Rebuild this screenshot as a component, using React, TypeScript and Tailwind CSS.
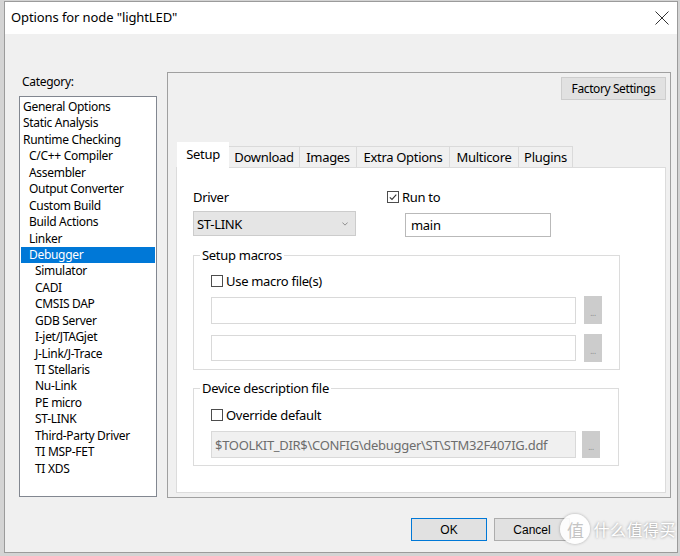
import React from "react";

const CATEGORIES: { label: string; level: number; selected?: boolean }[] = [
  { label: "General Options", level: 0 },
  { label: "Static Analysis", level: 0 },
  { label: "Runtime Checking", level: 0 },
  { label: "C/C++ Compiler", level: 1 },
  { label: "Assembler", level: 1 },
  { label: "Output Converter", level: 1 },
  { label: "Custom Build", level: 1 },
  { label: "Build Actions", level: 1 },
  { label: "Linker", level: 1 },
  { label: "Debugger", level: 1, selected: true },
  { label: "Simulator", level: 2 },
  { label: "CADI", level: 2 },
  { label: "CMSIS DAP", level: 2 },
  { label: "GDB Server", level: 2 },
  { label: "I-jet/JTAGjet", level: 2 },
  { label: "J-Link/J-Trace", level: 2 },
  { label: "TI Stellaris", level: 2 },
  { label: "Nu-Link", level: 2 },
  { label: "PE micro", level: 2 },
  { label: "ST-LINK", level: 2 },
  { label: "Third-Party Driver", level: 2 },
  { label: "TI MSP-FET", level: 2 },
  { label: "TI XDS", level: 2 },
];

const TABS = [
  { label: "Setup", w: "w-[52px]" },
  { label: "Download", w: "w-[71px]" },
  { label: "Images", w: "w-[57px]" },
  { label: "Extra Options", w: "w-[93px]" },
  { label: "Multicore", w: "w-[69px]" },
  { label: "Plugins", w: "w-[54px]" },
];

const indent = ["pl-[2px]", "pl-[8px]", "pl-[14px]"];

function CheckBox({ checked }: { checked?: boolean }) {
  return (
    <span className="flex h-[12px] w-[12px] shrink-0 items-center justify-center border border-[#4d4d4d] bg-white">
      {checked && (
        <svg viewBox="0 0 10 10" className="h-[10px] w-[10px]">
          <path d="M1.8 5.3 L4 7.4 L8.3 2.6" fill="none" stroke="#333" strokeWidth="1.1" />
        </svg>
      )}
    </span>
  );
}

function DotsButton({ h }: { h: string }) {
  return (
    <div className={`flex w-[18px] ${h} items-end justify-center bg-[#cccccc] pb-[7px] text-[8px] leading-none text-[#8a8a8a]`}>
      ...
    </div>
  );
}

export default function App() {
  return (
    <div className="h-[556px] w-[680px] overflow-hidden bg-[#d4d4d4] pb-[3px] pl-[4px] pr-[2px] pt-px font-['Noto_Sans',sans-serif] text-black">
      <div className="relative flex h-full flex-col border border-[#9b9b9b] bg-[#f0f0f0]">
        {/* title bar */}
        <div className="flex h-[32px] shrink-0 items-center justify-between bg-white pl-[6px] pr-[8px]">
          <span className="text-[13px] tracking-[-0.1px]">Options for node "lightLED"</span>
          <svg viewBox="0 0 14 14" className="h-[14px] w-[14px]">
            <path d="M0.5 0.5 L13.5 13.5 M13.5 0.5 L0.5 13.5" stroke="#333" strokeWidth="1" />
          </svg>
        </div>

        {/* body */}
        <div className="flex flex-1 flex-col pt-[38px]">
          <div className="flex items-start">
            <div className="ml-[14px] w-[138px]">
              <div className="mt-[2px] h-[16px] pl-[3px] text-[12px] leading-[16px] tracking-[-0.3px]">Category:</div>
              <div className="mt-[6px] h-[401px] border border-[#828790] bg-white px-px pt-[2px]">
                {CATEGORIES.map((c) => (
                  <div
                    key={c.label}
                    className={`h-[16.44px] text-[12px] leading-[16.44px] tracking-[-0.3px] ${indent[c.level]} ${
                      c.selected ? "bg-[#0078d7] text-white" : ""
                    }`}
                  >
                    {c.label}
                  </div>
                ))}
              </div>
            </div>

            <div className="ml-[10px] flex h-[426px] w-[504px] flex-col border border-[#a0a0a0] pl-[8px] pr-[4px] pt-[4px]">
              <div className="flex justify-end">
                <div className="flex h-[23px] w-[105px] items-center justify-center border border-[#cdcdcd] bg-[#e1e1e1] text-[12px] tracking-[-0.4px]">
                  Factory Settings
                </div>
              </div>

              {/* tabs */}
              <div className="mt-[43px] flex h-[25px] items-end pl-px">
                {TABS.map((t, i) => (
                  <div
                    key={t.label}
                    className={`${t.w} flex items-center justify-center text-[13px] tracking-[-0.3px] ${
                      i === 0
                        ? "relative z-10 h-[26px] bg-white"
                        : "h-[22px] border-r border-t border-[#dadada] bg-[#f0f0f0]"
                    }`}
                  >
                    {t.label}
                  </div>
                ))}
              </div>

              <div className="-mt-px h-[326px] border border-[#dcdcdc] bg-white pl-[16px] pt-[21px] text-[13px] leading-[16px] tracking-[-0.3px]">
                <div className="flex items-start">
                  <div className="flex flex-col">
                    <div className="h-[16px]">Driver</div>
                    <div className="mt-[6px] flex h-[25px] w-[163px] items-center justify-between border border-[#cccccc] bg-[#e5e5e5] pl-[3px] pr-[7px]">
                      <span>ST-LINK</span>
                      <svg viewBox="0 0 8 5" className="h-[4px] w-[6px]">
                        <path d="M0.5 0.5 L4 4 L7.5 0.5" fill="none" stroke="#666" strokeWidth="0.9" />
                      </svg>
                    </div>
                  </div>
                  <div className="ml-[31px] flex flex-col">
                    <div className="flex h-[16px] items-center gap-[3px]">
                      <CheckBox checked />
                      <span>Run to</span>
                    </div>
                    <div className="ml-[18px] mt-[8px] flex h-[24px] w-[146px] items-center border border-[#b9b9b9] bg-white pl-[5px]">
                      main
                    </div>
                  </div>
                </div>

                <fieldset className="mt-[10px] w-[426px] border border-[#dcdcdc] px-[17px] pb-[7px] pt-[10px]">
                  <legend className="-ml-[11px] px-[2px]">Setup macros</legend>
                  <div className="flex h-[16px] items-center gap-[3px]">
                    <CheckBox />
                    <span>Use macro file(s)</span>
                  </div>
                  <div className="mt-[7px] flex items-center gap-[8px]">
                    <div className="h-[27px] w-[365px] border border-[#d9d9d9] bg-white" />
                    <DotsButton h="h-[28px]" />
                  </div>
                  <div className="mt-[10px] flex items-center gap-[8px]">
                    <div className="h-[26px] w-[365px] border border-[#d9d9d9] bg-white" />
                    <DotsButton h="h-[28px]" />
                  </div>
                </fieldset>

                <fieldset className="mt-[10px] w-[426px] border border-[#dcdcdc] px-[17px] pb-[7px] pt-[11px]">
                  <legend className="-ml-[11px] px-[2px]">Device description file</legend>
                  <div className="flex h-[16px] items-center gap-[3px]">
                    <CheckBox />
                    <span>Override default</span>
                  </div>
                  <div className="mt-[8px] flex items-center gap-[6px]">
                    <div className="flex h-[27px] w-[365px] items-center border border-[#d9d9d9] bg-[#f0f0f0] pl-[3px] text-[#6d6d6d]">
                      $TOOLKIT_DIR$\CONFIG\debugger\ST\STM32F407IG.ddf
                    </div>
                    <DotsButton h="h-[27px]" />
                  </div>
                </fieldset>
              </div>
            </div>
          </div>

          {/* buttons */}
          <div className="mt-[20px] flex justify-end gap-[7px] pr-[107px] font-['Liberation_Sans',sans-serif] text-[12px]">
            <div className="flex h-[23px] w-[76px] items-center justify-center border border-[#0078d7] bg-[#e1e1e1]">OK</div>
            <div className="flex h-[23px] w-[76px] items-center justify-center border border-[#adadad] bg-[#e1e1e1]">Cancel</div>
          </div>
        </div>

        {/* watermark */}
        <div className="absolute bottom-[8px] right-[1px] flex items-center gap-[3px] font-['Noto_Sans_CJK_SC',sans-serif] text-white [text-shadow:0_0_3px_rgba(0,0,0,0.45)]">
          <span className="flex h-[30px] w-[30px] items-center justify-center rounded-full bg-white/90 text-[17px] leading-none text-[#c4c4c4] shadow-[0_0_3px_rgba(0,0,0,0.3)] [text-shadow:none]">值</span>
          <span className="text-[16px] leading-none tracking-[0.5px]">什么值得买</span>
        </div>
      </div>
    </div>
  );
}
